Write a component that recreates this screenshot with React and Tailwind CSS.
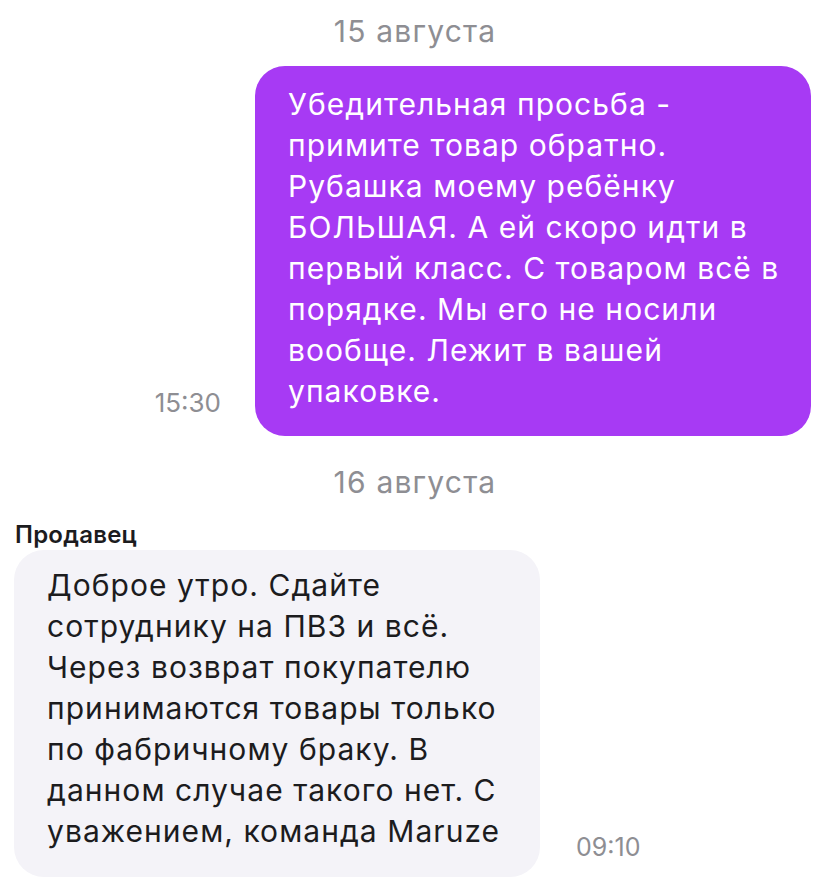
import React from 'react';

// date divider between days
const DateLabel = ({ children, className = '' }) => (
  <div className={`flex justify-center text-[30px] leading-[34px] tracking-[0.04em] text-[#8e8e93] ${className}`}>
    {children}
  </div>
);

const Time = ({ children, className = '' }) => (
  <span className={`text-[25px] leading-none text-[#8e8e93] whitespace-nowrap ${className}`}>
    {children}
  </span>
);

export default function App() {
  return (
    <div className="w-[828px] h-[893px] bg-white overflow-hidden font-['Inter','Noto_Sans',sans-serif]">
      {/* 15 августа */}
      <DateLabel className="pt-[14px] pl-[2px]">15 августа</DateLabel>

      {/* outgoing message */}
      <div className="flex items-end justify-end mt-[18px] pr-[17px]">
        <Time className="mr-[34px] mb-[20px] text-[26px]">15:30</Time>
        <div className="w-[556px] rounded-[30px] bg-[#a73af4] pl-[33px] pr-[16px] pt-[18px] pb-[24px]">
          <p className="text-[30px] leading-[41px] tracking-[0.035em] text-white whitespace-nowrap">
            Убедительная просьба -<br />
            примите товар обратно.<br />
            Рубашка моему ребёнку<br />
            БОЛЬШАЯ. А ей скоро идти в<br />
            первый класс. С товаром всё в<br />
            порядке. Мы его не носили<br />
            вообще. Лежит в вашей<br />
            упаковке.
          </p>
        </div>
      </div>

      {/* 16 августа */}
      <DateLabel className="mt-[29px] pl-[2px]">16 августа</DateLabel>

      {/* incoming message */}
      <div className="pl-[14px] mt-[23px]">
        <div className="pl-[1px] text-[24px] leading-[26px] tracking-[0.01em] font-semibold text-[#1c1c1e]">Продавец</div>
        <div className="flex items-end mt-[2px]">
          <div className="w-[526px] rounded-[30px] bg-[#f4f3f8] pl-[33px] pt-[15px] pb-[25px]">
            <p className="text-[30px] leading-[41px] tracking-[0.035em] text-[#1c1c1e] whitespace-nowrap">
              Доброе утро. Сдайте<br />
              сотруднику на ПВЗ и всё.<br />
              Через возврат покупателю<br />
              принимаются товары только<br />
              по фабричному браку. В<br />
              данном случае такого нет. С<br />
              уважением, команда Maruze
            </p>
          </div>
          <Time className="ml-[36px] mb-[17px]">09:10</Time>
        </div>
      </div>
    </div>
  );
}
